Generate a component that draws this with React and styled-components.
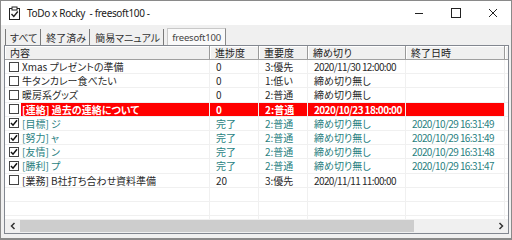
import React from "react";
import styled, { createGlobalStyle, css } from "styled-components";

const GlobalStyle = createGlobalStyle`
  html, body { margin: 0; padding: 0; background: #ffffff; }
  body { font-family: "Noto Sans CJK JP", "Noto Sans", sans-serif; }
  * { box-sizing: border-box; }
`;

const COLS = "205px 49px 49px 98px 99px 1fr";

const Window = styled.div`
  width: 512px;
  height: 240px;
  border: 1px solid #8a8a8a;
  border-bottom-width: 2px;
  display: flex;
  flex-direction: column;
  background: #f0f0f0;
  overflow: hidden;
`;

const TitleBar = styled.div`
  height: 24px;
  flex: none;
  background: #ffffff;
  display: flex;
  align-items: center;
`;

const AppIcon = styled.svg`
  margin-left: 7px;
  flex: none;
`;

const TitleText = styled.span`
  margin-left: 6px;
  font-family: "Noto Sans", sans-serif;
  font-size: 10px;
  letter-spacing: -0.35px;
  color: #1a1a1a;
  white-space: pre;
`;

const Controls = styled.div`
  margin-left: auto;
  display: flex;
  height: 100%;
`;

const CtrlButton = styled.div`
  width: ${(p) => p.$w}px;
  height: 100%;
  display: flex;
  align-items: center;
  justify-content: center;
`;

const Body = styled.div`
  flex: 1;
  display: flex;
  flex-direction: column;
  padding: 2px 2px 4px 3px;
  min-height: 0;
`;

const TabStrip = styled.div`
  height: 18px;
  flex: none;
  display: flex;
  align-items: flex-end;
  padding-left: 1px;
`;

const Tab = styled.div`
  height: 16px;
  display: flex;
  align-items: center;
  font-size: 10px;
  color: #333;
  font-feature-settings: "palt";
  white-space: nowrap;
  ${(p) =>
    p.$active
      ? css`
          height: 17px;
          margin-left: 3px;
          padding: 0 4px;
          background: #fafafa;
          border: 1px solid #c8c8c8;
          border-right-color: #8a8a8a;
          border-bottom: none;
          font-family: "Noto Sans", sans-serif;
          font-size: 9.5px;
          letter-spacing: -0.2px;
          color: #444;
        `
      : css`
          padding: 0 3px 0 5px;
          border-right: 1px solid #7a7a7a;
          ${p.$first && "border-left: 1px solid #7a7a7a; padding-left: 4px;"}
        `}
`;

const ListView = styled.div`
  flex: 1;
  min-height: 0;
  border: 1px solid #828790;
  background: #ffffff;
  display: flex;
  flex-direction: column;
  overflow: hidden;
`;

const HeaderRow = styled.div`
  height: 14px;
  flex: none;
  display: grid;
  grid-template-columns: ${COLS};
  background: #f0f0f0;
  border-bottom: 1px solid #a0a0a0;
`;

const HeaderCell = styled.div`
  font-size: 10px;
  line-height: 13px;
  color: #222;
  padding-left: 5px;
  border-right: 1px solid #9a9a9a;
  box-shadow: inset 1px 1px 0 #ffffff;
  white-space: nowrap;
  overflow: hidden;
`;

const Rows = styled.div`
  flex: 1;
  min-height: 0;
  overflow: hidden;
`;

const Row = styled.div`
  height: 14.2px;
  display: grid;
  grid-template-columns: ${COLS};
  border-bottom: 1px solid #f0f0f0;
  font-size: 10px;
  font-feature-settings: "palt";
  color: ${(p) => (p.$alert ? "#ffffff" : p.$done ? "#2a7f7f" : "#2a2a2a")};
  font-weight: ${(p) => (p.$alert ? 700 : 400)};
`;

const Cell = styled.div`
  padding-left: 6px;
  border-right: 1px solid #f0f0f0;
  white-space: nowrap;
  overflow: hidden;
  line-height: 13px;
  background: ${(p) => (p.$alert ? "#ff0000" : "transparent")};
  letter-spacing: ${(p) => (p.$num ? "-0.6px" : "0")};
`;

const MainCell = styled.div`
  display: flex;
  align-items: center;
  border-right: 1px solid #f0f0f0;
  white-space: nowrap;
  overflow: hidden;
`;

const Check = styled.div`
  width: 10px;
  height: 10px;
  flex: none;
  margin: 0 2px 0 4px;
  border: 1px solid #444;
  background: #fff;
  display: flex;
  align-items: center;
  justify-content: center;
`;

const Label = styled.div`
  flex: 1;
  align-self: stretch;
  padding-left: 1px;
  line-height: 13px;
  background: ${(p) => (p.$alert ? "#ff0000" : "transparent")};
`;

const ScrollBar = styled.div`
  height: 14px;
  flex: none;
  display: flex;
  background: #f0f0f0;
`;

const ScrollArrow = styled.div`
  width: 15px;
  flex: none;
  display: flex;
  align-items: center;
  justify-content: center;
`;

const Thumb = styled.div`
  width: 394px;
  flex: none;
  margin: 1px 0;
  background: #cdcdcd;
`;

const Track = styled.div`
  flex: 1;
`;

const rows = [
  { done: false, text: "Xmas プレゼントの準備", prog: "0", pri: "3:優先", due: "2020/11/30 12:00:00", end: "" },
  { done: false, text: "牛タンカレー食べたい", prog: "0", pri: "1:低い", due: "締め切り無し", end: "" },
  { done: false, text: "暖房系グッズ", prog: "0", pri: "2:普通", due: "締め切り無し", end: "" },
  { done: false, alert: true, text: "[連絡] 過去の連絡について", prog: "0", pri: "2:普通", due: "2020/10/23 18:00:00", end: "" },
  { done: true, text: "[目標] ジ", prog: "完了", pri: "2:普通", due: "締め切り無し", end: "2020/10/29 16:31:49" },
  { done: true, text: "[努力] ャ", prog: "完了", pri: "2:普通", due: "締め切り無し", end: "2020/10/29 16:31:49" },
  { done: true, text: "[友情] ン", prog: "完了", pri: "2:普通", due: "締め切り無し", end: "2020/10/29 16:31:48" },
  { done: true, text: "[勝利] プ", prog: "完了", pri: "2:普通", due: "締め切り無し", end: "2020/10/29 16:31:47" },
  { done: false, text: "[業務] B社打ち合わせ資料準備", prog: "20", pri: "3:優先", due: "2020/11/11 11:00:00", end: "" },
];

const isNum = (s) => /^[0-9/: ]+$/.test(s);

function CheckMark() {
  return (
    <svg width="8" height="8" viewBox="0 0 8 8">
      <path d="M1 4 L3 6.2 L7 1.2" fill="none" stroke="#111" strokeWidth="1.5" />
    </svg>
  );
}

export default function App() {
  return (
    <>
      <GlobalStyle />
      <Window>
        <TitleBar>
          <AppIcon width="13" height="14" viewBox="0 0 13 14">
            <rect x="1.5" y="2.5" width="10" height="11" fill="#fff" stroke="#222" strokeWidth="1" />
            <rect x="4" y="1" width="5" height="3" fill="#fff" stroke="#222" strokeWidth="1" />
            <path d="M3.5 8 L5.8 10.5 L9.8 5.5" fill="none" stroke="#222" strokeWidth="1.4" />
          </AppIcon>
          <TitleText>{"ToDo x Rocky  - freesoft100 -"}</TitleText>
          <Controls>
            <CtrlButton $w={37}>
              <svg width="10" height="10" viewBox="0 0 10 10">
                <path d="M1 5.5 H9" stroke="#222" strokeWidth="1" />
              </svg>
            </CtrlButton>
            <CtrlButton $w={38}>
              <svg width="10" height="10" viewBox="0 0 10 10">
                <rect x="0.5" y="0.5" width="9" height="9" fill="none" stroke="#222" strokeWidth="1" />
              </svg>
            </CtrlButton>
            <CtrlButton $w={36}>
              <svg width="10" height="10" viewBox="0 0 10 10">
                <path d="M1 1 L9 9 M9 1 L1 9" stroke="#222" strokeWidth="1" />
              </svg>
            </CtrlButton>
          </Controls>
        </TitleBar>
        <Body>
          <TabStrip>
            <Tab $first>すべて</Tab>
            <Tab>終了済み</Tab>
            <Tab>簡易マニュアル</Tab>
            <Tab $active>freesoft100</Tab>
          </TabStrip>
          <ListView>
            <HeaderRow>
              <HeaderCell>内容</HeaderCell>
              <HeaderCell>進捗度</HeaderCell>
              <HeaderCell>重要度</HeaderCell>
              <HeaderCell>締め切り</HeaderCell>
              <HeaderCell>終了日時</HeaderCell>
              <HeaderCell />
            </HeaderRow>
            <Rows>
              {rows.map((r, i) => (
                <Row key={i} $done={r.done} $alert={r.alert}>
                  <MainCell>
                    <Check>{r.done && <CheckMark />}</Check>
                    <Label $alert={r.alert}>{r.text}</Label>
                  </MainCell>
                  <Cell $alert={r.alert}>{r.prog}</Cell>
                  <Cell $alert={r.alert}>{r.pri}</Cell>
                  <Cell $alert={r.alert} $num={isNum(r.due)}>{r.due}</Cell>
                  <Cell $alert={r.alert} $num>{r.end}</Cell>
                  <Cell />
                </Row>
              ))}
              {[0, 1, 2].map((i) => (
                <Row key={"e" + i}>
                  <MainCell />
                  <Cell />
                  <Cell />
                  <Cell />
                  <Cell />
                  <Cell />
                </Row>
              ))}
            </Rows>
            <ScrollBar>
              <ScrollArrow>
                <svg width="6" height="8" viewBox="0 0 6 8">
                  <path d="M4.5 1 L1.5 4 L4.5 7" fill="none" stroke="#333" strokeWidth="1.5" />
                </svg>
              </ScrollArrow>
              <Thumb />
              <Track />
              <ScrollArrow>
                <svg width="6" height="8" viewBox="0 0 6 8">
                  <path d="M1.5 1 L4.5 4 L1.5 7" fill="none" stroke="#333" strokeWidth="1.5" />
                </svg>
              </ScrollArrow>
            </ScrollBar>
          </ListView>
        </Body>
      </Window>
    </>
  );
}
